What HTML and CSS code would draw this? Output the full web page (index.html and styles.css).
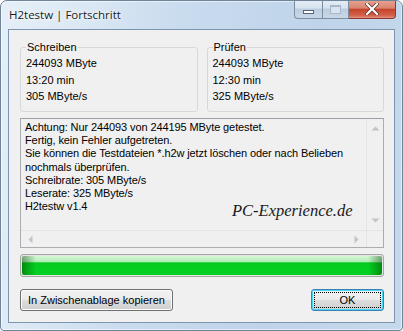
FILE: index.html
```html
<!DOCTYPE html>
<html>
<head>
<meta charset="utf-8">
<title>H2testw | Fortschritt</title>
<link rel="stylesheet" href="styles.css">
</head>
<body>
<div class="window">
  <div class="titlebar">
    <span class="title">H2testw | Fortschritt</span>
    <div class="caption">
      <span class="cbtn min"><span class="min-glyph"></span></span>
      <span class="cbtn max"><span class="max-glyph"></span></span>
      <span class="cbtn close">
        <svg width="14" height="12" viewBox="0 0 14 12"><path d="M2 1 L12 11 M12 1 L2 11" stroke="#5a2a22" stroke-width="3.6" stroke-linecap="square"/><path d="M2 1 L12 11 M12 1 L2 11" stroke="#ffffff" stroke-width="2.2" stroke-linecap="square"/></svg>
      </span>
    </div>
  </div>
  <div class="client">
    <div class="groups">
      <fieldset class="group">
        <legend>Schreiben</legend>
        <div>244093 MByte</div>
        <div>13:20 min</div>
        <div>305 MByte/s</div>
      </fieldset>
      <fieldset class="group">
        <legend>Prüfen</legend>
        <div>244093 MByte</div>
        <div>12:30 min</div>
        <div>325 MByte/s</div>
      </fieldset>
    </div>
    <div class="log">
      <div class="log-row">
        <div class="log-text">
          <div>Achtung: Nur 244093 von 244195 MByte getestet.</div>
          <div>Fertig, kein Fehler aufgetreten.</div>
          <div>Sie können die Testdateien *.h2w jetzt löschen oder nach Belieben</div>
          <div>nochmals überprüfen.</div>
          <div>Schreibrate: 305 MByte/s</div>
          <div>Leserate: 325 MByte/s</div>
          <div>H2testw v1.4</div>
        </div>
        <div class="vscroll">
          <svg class="arrow" width="9" height="5" viewBox="0 0 9 5"><path d="M0.5 4.5 L4.5 0.5 L8.5 4.5 Z" fill="#c4c4c4"/></svg>
          <svg class="arrow" width="9" height="5" viewBox="0 0 9 5"><path d="M0.5 0.5 L4.5 4.5 L8.5 0.5 Z" fill="#c4c4c4"/></svg>
        </div>
        <div class="watermark">PC-Experience.de</div>
      </div>
      <div class="hrow">
        <div class="hscroll">
          <svg width="5" height="9" viewBox="0 0 5 9"><path d="M4.5 0.5 L0.5 4.5 L4.5 8.5 Z" fill="#c4c4c4"/></svg>
          <svg width="5" height="9" viewBox="0 0 5 9"><path d="M0.5 0.5 L4.5 4.5 L0.5 8.5 Z" fill="#c4c4c4"/></svg>
        </div>
        <div class="sizebox"></div>
      </div>
    </div>
    <div class="progress"><div class="progress-fill"></div></div>
    <div class="buttons">
      <button class="btn">In Zwischenablage kopieren</button>
      <button class="btn ok"><span class="focus">OK</span></button>
    </div>
  </div>
</div>
</body>
</html>
```
FILE: styles.css
```css
* { box-sizing: border-box; }
html, body { margin: 0; padding: 0; }
body {
  width: 403px;
  height: 331px;
  overflow: hidden;
  background: #ffffff;
  font-family: "Liberation Sans", "DejaVu Sans", sans-serif;
  font-size: 11px;
  color: #000;
}
.window {
  width: 403px;
  height: 331px;
  border: 1px solid #6f8399;
  border-radius: 7px 7px 4px 4px;
  background: linear-gradient(100deg, #e6eff8 0%, #dbe8f4 18%, #c9dbee 40%, #bfd4ea 70%, #c6d9ec 100%);
  box-shadow: inset 0 0 0 1px rgba(255,255,255,0.55);
  display: flex;
  flex-direction: column;
  overflow: hidden;
}
.titlebar {
  height: 28px;
  display: flex;
  justify-content: space-between;
  align-items: flex-start;
  padding-left: 8px;
  padding-right: 6px;
}
.title {
  font-family: "Open Sans", "Noto Sans", sans-serif;
  font-size: 11.5px;
  line-height: 28px;
  color: #1a1a1a;
  text-shadow: 0 0 6px #ffffff, 0 0 3px #ffffff;
}
.caption {
  display: flex;
  height: 19px;
  margin-top: -1px;
}
.cbtn {
  height: 19px;
  display: flex;
  align-items: center;
  justify-content: center;
  border: 1px solid #7d8ea0;
  border-top: none;
}
.min {
  width: 28px;
  border-radius: 0 0 0 4px;
  border-right: none;
  background: linear-gradient(#e4edf6 0%, #d6e3f0 45%, #bccde0 50%, #c9d8e8 100%);
}
.max {
  width: 27px;
  background: linear-gradient(#e4edf6 0%, #d6e3f0 45%, #bccde0 50%, #c9d8e8 100%);
}
.close {
  width: 47px;
  border-left: none;
  border-radius: 0 0 4px 0;
  background: linear-gradient(#e8a393 0%, #d98571 45%, #c7442b 52%, #d2604b 85%, #e3937f 100%);
  border-color: #8b3b2f;
}
.min-glyph {
  width: 11px;
  height: 4px;
  margin-top: 5px;
  background: #ffffff;
  border: 1px solid #55657a;
}
.max-glyph {
  width: 11px;
  height: 9px;
  border: 1px solid #a9b7c6;
  border-top-width: 2px;
  background: #d9e4ef;
}
.client {
  margin: 0 7px 7px 7px;
  height: 295px;
  border: 1px solid #7d95ae;
  background: #f0f0f0;
  padding: 11px 10px 0 11px;
  display: flex;
  flex-direction: column;
}
.groups {
  display: flex;
  gap: 9px;
}
.group {
  flex: 1;
  margin: 0;
  height: 71px;
  border: 1px solid #d5d9dd;
  border-radius: 3px;
  padding: 1px 5px 0 5px;
  line-height: 16.5px;
  min-width: 0;
}
.group legend {
  padding: 0 1px;
  line-height: 13px;
}
.log {
  margin-top: 6px;
  height: 130px;
  border: 1px solid #abadb3;
  border-top-color: #9c9fa6;
  background: #f0f0f0;
  display: flex;
  flex-direction: column;
}
.log-row {
  flex: 1;
  display: flex;
  position: relative;
}
.log-text {
  flex: 1;
  padding: 2px 0 0 4px;
  line-height: 13.2px;
  letter-spacing: -0.1px;
  white-space: nowrap;
  overflow: hidden;
}
.vscroll {
  width: 17px;
  background: #f0f0f0;
  border-left: 1px solid #e4e4e4;
  display: flex;
  flex-direction: column;
  justify-content: space-between;
  align-items: center;
  padding: 7px 0 7px 0;
}
.watermark {
  position: absolute;
  left: 211px;
  top: 82px;
  font-family: "Liberation Serif", "DejaVu Serif", serif;
  font-style: italic;
  font-size: 16.5px;
  color: #1a1a1a;
}
.hrow {
  height: 17px;
  display: flex;
}
.hscroll {
  flex: 1;
  background: #f0f0f0;
  border-top: 1px solid #e4e4e4;
  display: flex;
  justify-content: space-between;
  align-items: center;
  padding: 0 7px 0 7px;
}
.sizebox {
  width: 17px;
  background: #f0f0f0;
  border-top: 1px solid #e4e4e4;
  border-left: 1px solid #e4e4e4;
}
.progress {
  margin-top: 6px;
  height: 23px;
  border: 1px solid #a0a8a0;
  border-radius: 3px;
  background: #e6e6e6;
  padding: 1px;
}
.progress-fill {
  height: 100%;
  border-radius: 2px;
  background:
    linear-gradient(90deg, rgba(0,60,0,0.45) 0px, rgba(0,60,0,0) 14px, rgba(0,60,0,0) calc(100% - 14px), rgba(0,60,0,0.45) 100%),
    linear-gradient(#d4f7d4 0%, #b4edb8 30%, #06c91e 36%, #03d122 70%, #06cf22 100%);
}
.buttons {
  margin-top: 12px;
  display: flex;
  justify-content: space-between;
}
.btn {
  height: 22px;
  font-family: "Liberation Sans", "DejaVu Sans", sans-serif;
  font-size: 11px;
  color: #000;
  border: 1px solid #707070;
  border-radius: 3px;
  background: linear-gradient(#f2f2f2 0%, #ebebeb 48%, #dddddd 52%, #cfcfcf 100%);
  box-shadow: inset 0 0 0 1px #fcfcfc;
  padding: 0;
  white-space: nowrap;
  width: 153px;
}
.ok {
  width: 73px;
  border-color: #3c7fb1;
  box-shadow: inset 0 0 0 1px #48d8f8;
  padding: 2px;
}
.focus {
  display: flex;
  align-items: center;
  justify-content: center;
  height: 100%;
  border: 1px dotted #000;
}
```
